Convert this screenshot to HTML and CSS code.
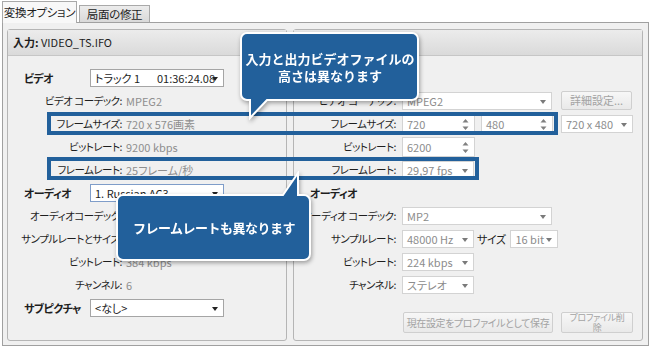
FILE: index.html
```html
<!doctype html>
<html lang="ja">
<head>
    <meta charset="UTF-8">
    <title>変換オプション</title>
    <link rel="stylesheet" href="styles.css">
</head>
<body>
<div class="stage">
    <div class="tabs">
        <div class="tab active">変換オプション</div>
        <div class="tab">局面の修正</div>
    </div>
    <div class="frame">
        <!-- 入力 -->
        <section class="panel left">
            <div class="panel-head"><b>入力:</b> VIDEO_TS.IFO</div>
            <div class="panel-body">
                <div class="row">
                    <span class="sec">ビデオ</span>
                    <div class="select sel-track"><span class="track">トラック 1</span><span>01:36:24.08</span></div>
                </div>
                <div class="row"><span class="lbl">ビデオ コーデック:</span><span class="val">MPEG2</span></div>
                <div class="row"><span class="lbl">フレームサイズ:</span><span class="val">720 x 576画素</span></div>
                <div class="row"><span class="lbl">ビットレート:</span><span class="val">9200 kbps</span></div>
                <div class="row"><span class="lbl">フレームレート:</span><span class="val">25フレーム/秒</span></div>
                <div class="row">
                    <span class="sec">オーディオ</span>
                    <div class="select sel-track focus">1. Russian AC3</div>
                </div>
                <div class="row"><span class="lbl">オーディオコーデック:</span><span class="val">AC3</span></div>
                <div class="row"><span class="lbl">サンプルレートとサイズ:</span><span class="val">48000 Hz, 16 bit</span></div>
                <div class="row"><span class="lbl">ビットレート:</span><span class="val">384 kbps</span></div>
                <div class="row"><span class="lbl">チャンネル:</span><span class="val">6</span></div>
                <div class="row">
                    <span class="sec">サブピクチャ</span>
                    <div class="select sel-track">&lt;なし&gt;</div>
                </div>
            </div>
        </section>

        <!-- 出力 -->
        <section class="panel right">
            <div class="panel-head"></div>
            <div class="panel-body">
                <div class="row"></div>
                <div class="row">
                    <span class="lbl">ビデオ コーデック:</span>
                    <div class="select off sel-long">MPEG2</div>
                    <div class="btn btn-detail">詳細設定...</div>
                </div>
                <div class="row">
                    <span class="lbl">フレームサイズ:</span>
                    <div class="spin">720<svg class="arrows" width="7" height="13" viewBox="0 0 7 13"><path d="M0.5 4.5 L3.5 1 L6.5 4.5 Z M0.5 8.5 L3.5 12 L6.5 8.5 Z" fill="#808080"/></svg></div>
                    <div class="spin spin-h">480<svg class="arrows" width="7" height="13" viewBox="0 0 7 13"><path d="M0.5 4.5 L3.5 1 L6.5 4.5 Z M0.5 8.5 L3.5 12 L6.5 8.5 Z" fill="#808080"/></svg></div>
                    <div class="select off sel-mid gap8">720 x 480</div>
                </div>
                <div class="row">
                    <span class="lbl">ビットレート:</span>
                    <div class="spin">6200<svg class="arrows" width="7" height="13" viewBox="0 0 7 13"><path d="M0.5 4.5 L3.5 1 L6.5 4.5 Z M0.5 8.5 L3.5 12 L6.5 8.5 Z" fill="#808080"/></svg></div>
                </div>
                <div class="row">
                    <span class="lbl">フレームレート:</span>
                    <div class="select off sel-mid">29,97 fps</div>
                </div>
                <div class="row"><span class="sec">オーディオ</span></div>
                <div class="row">
                    <span class="lbl">オーディオ コーデック:</span>
                    <div class="select off sel-long">MP2</div>
                </div>
                <div class="row">
                    <span class="lbl">サンプルレート:</span>
                    <div class="select off sel-mid">48000 Hz</div>
                    <span class="size-lbl">サイズ</span>
                    <div class="select off sel-small">16 bit</div>
                </div>
                <div class="row">
                    <span class="lbl">ビットレート:</span>
                    <div class="select off sel-mid">224 kbps</div>
                </div>
                <div class="row">
                    <span class="lbl">チャンネル:</span>
                    <div class="select off sel-mid">ステレオ</div>
                </div>
                <div class="buttons">
                    <div class="btn btn-save">現在設定をプロファイルとして保存</div>
                    <div class="btn btn-del"><span>プロファイル削</span><span>除</span></div>
                </div>
            </div>
        </section>
    </div>

    <!-- 注釈 -->
    <div class="mark mark-size"></div>
    <div class="mark mark-rate"></div>

    <div class="callout callout-top">
        <svg width="180" height="90" viewBox="0 0 180 90"><path d="M7 1 H172 A6 6 0 0 1 178 7 V62 A6 6 0 0 1 172 68 H27 L10 86 V68 H7 A6 6 0 0 1 1 62 V7 A6 6 0 0 1 7 1 Z" fill="#22609b" stroke="#fff" stroke-width="2"/></svg>
        <p class="callout-text">入力と出力ビデオファイルの<br>高さは異なります</p>
    </div>
    <div class="callout callout-bottom">
        <svg width="196" height="91" viewBox="0 0 196 91"><path d="M7 24 H167 L182 2 V24 H188 A6 6 0 0 1 194 30 V83 A6 6 0 0 1 188 89 H7 A6 6 0 0 1 1 83 V30 A6 6 0 0 1 7 24 Z" fill="#22609b" stroke="#fff" stroke-width="2"/></svg>
        <p class="callout-text">フレームレートも異なります</p>
    </div>
</div>
</body>
</html>
```

FILE: styles.css
```css
*{margin:0;padding:0;box-sizing:border-box;}
body{
    font-family:"Noto Sans CJK JP","Noto Sans",sans-serif;
    font-size:11px;
    color:#1e1e1e;
    background:#fff;
    font-feature-settings:"palt";
}
.stage{
    position:relative;
    width:650px;
    height:350px;
    overflow:hidden;
}

/* タブ */
.tabs{
    display:flex;
    align-items:flex-end;
    height:23px;
    padding-left:2px;
    gap:2px;
    position:relative;
    z-index:1;
}
.tab{
    width:71px;
    height:17px;
    margin-bottom:1px;
    border:1px solid #a9a9a9;
    border-bottom:none;
    background:linear-gradient(#ececec,#d9d9d9);
    font-size:11.5px;
    letter-spacing:-0.3px;
    line-height:16px;
    text-align:center;
    white-space:nowrap;
}
.tab.active{
    width:75px;
    height:22px;
    margin-bottom:0;
    background:#f8f8f8;
    line-height:20px;
}

/* 枠 */
.frame{
    margin:-1px 0 0 2px;
    width:647px;
    height:324px;
    border:1px solid #a0a0a0;
    background:#f0f0f0;
    display:flex;
    gap:6px;
    padding:6px 5px 4px 4px;
}
.panel{
    border:1px solid #b5b5b5;
    border-radius:3px;
    background:#f0f0f0;
    display:flex;
    flex-direction:column;
}
.panel.left{width:280px;}
.panel.right{width:350px;}
.panel-head{
    height:26px;
    border-bottom:1px solid #c6c6c6;
    background:linear-gradient(#ececec,#dadada);
    padding-left:5px;
    line-height:25px;
    font-size:11px;
}
.panel-body{
    flex:1;
    display:flex;
    flex-direction:column;
    padding:10px 0 7px 16px;
}
.row{
    display:flex;
    align-items:center;
    height:23px;
    white-space:nowrap;
}
.sec{
    width:66px;
    font-weight:bold;
    font-size:11px;
    letter-spacing:-0.6px;
}
.lbl{
    width:98px;
    margin-right:4px;
    display:flex;
    justify-content:flex-end;
    font-size:10.5px;
    letter-spacing:-0.5px;
}
.right .lbl{
    width:86px;
    margin-right:6px;
}
.val{color:#8e8e8e;}

/* 入力欄 */
.select{
    position:relative;
    height:18px;
    background:#fff;
    border:1px solid #a5a5a5;
    padding:0 16px 0 4px;
    line-height:16px;
    overflow:hidden;
}
.select::after{
    content:"";
    position:absolute;
    right:5px;
    top:7px;
    border-left:3.5px solid transparent;
    border-right:3.5px solid transparent;
    border-top:4px solid #222;
}
.select.focus{border-color:#7f9dc9;}
.select.off{
    border-color:#d3d3d3;
    color:#8c8c8c;
}
.select.off::after{border-top-color:#7a7a7a;}
.sel-track{width:134px;}
.sel-track .track{display:inline-block;width:62px;}
.sel-long{width:150px;}
.sel-mid{width:72px;}
.sel-small{width:48px;}
.gap8{margin-left:8px;}
.size-lbl{margin:0 5px 0 3px;letter-spacing:-0.5px;}

.spin{
    position:relative;
    width:73px;
    height:20px;
    background:#fff;
    border:1px solid #d3d3d3;
    padding-left:4px;
    line-height:18px;
    color:#8c8c8c;
}
.spin-h{
    width:72px;
    margin-left:6px;
}
.spin .arrows{
    position:absolute;
    right:5px;
    top:3px;
}

.btn{
    height:19px;
    border:1px solid #cfcfcf;
    border-radius:2px;
    background:linear-gradient(#f7f7f7,#e9e9e9);
    color:#a3a3a3;
    text-align:center;
    line-height:17px;
    white-space:nowrap;
}
.btn-detail{
    width:71px;
    margin-left:9px;
}
.buttons{
    display:flex;
    gap:8px;
    margin:auto 0 0 93px;
}
.btn-save{
    width:150px;
    height:21px;
    line-height:19px;
    font-size:10px;
    letter-spacing:-0.4px;
}
.btn-del{
    width:72px;
    height:21px;
    display:flex;
    flex-direction:column;
    align-items:center;
    font-size:9px;
    line-height:9.5px;
    letter-spacing:-0.3px;
}

/* 注釈 */
.mark{
    position:absolute;
    left:47px;
    height:23px;
    border:4px solid #22609b;
}
.mark-size{top:112px;width:511px;}
.mark-rate{top:157px;width:432px;}

.callout{
    position:absolute;
    filter:drop-shadow(1px 2px 2px rgba(0,0,0,0.35));
}
.callout svg{display:block;}
.callout-text{
    position:absolute;
    left:0;
    display:flex;
    align-items:center;
    justify-content:center;
    text-align:center;
    color:#fff;
    font-weight:bold;
    font-size:13px;
    letter-spacing:-0.5px;
    line-height:17px;
    font-feature-settings:normal;
}
.callout-top{left:240px;top:32px;}
.callout-top .callout-text{top:1px;width:180px;height:68px;letter-spacing:0;}
.callout-bottom{left:116px;top:171px;}
.callout-bottom .callout-text{top:24px;width:196px;height:65px;}
```
